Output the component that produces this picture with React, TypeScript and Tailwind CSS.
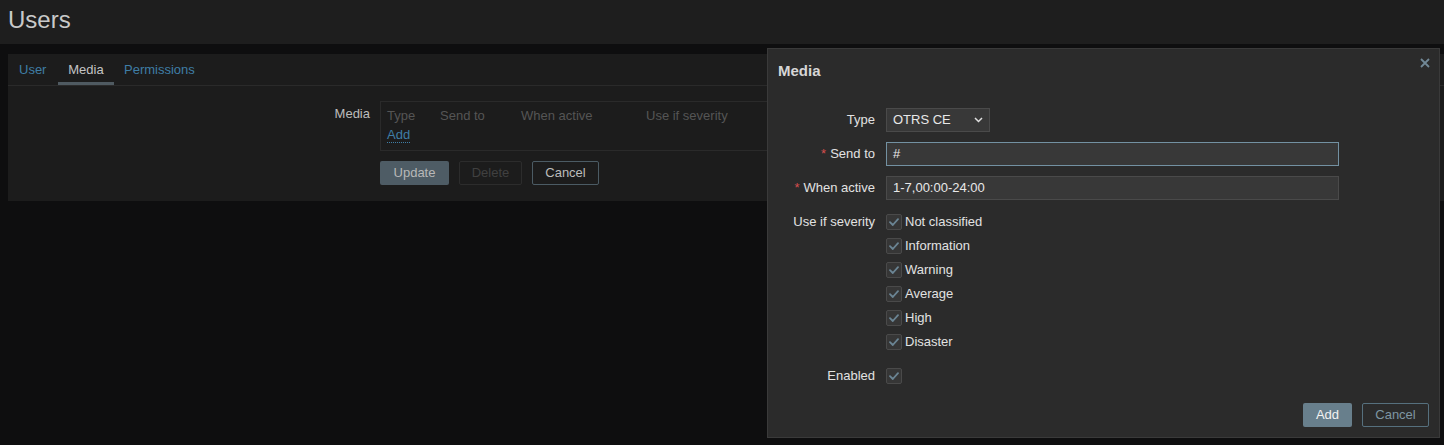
import React from "react";

const font = { fontFamily: '"Liberation Sans", Arial, sans-serif' };

function Check() {
  return (
    <span className="flex h-[16px] w-[16px] items-center justify-center rounded-[2px] border border-[#4a4a4a] bg-[#363636]">
      <svg width="10" height="8" viewBox="0 0 10 8" fill="none">
        <path d="M1 4.2 L3.8 7 L9 1.2" stroke="#6b8594" strokeWidth="1.8" strokeLinecap="round" strokeLinejoin="round" />
      </svg>
    </span>
  );
}

function Row({ label, req, children }: { label: string; req?: boolean; children: React.ReactNode }) {
  return (
    <div className="flex">
      <div className="flex h-[24px] w-[97px] shrink-0 items-center justify-end text-right text-[#e2e2e2]">
        {req && <span className="mr-[4px] text-[#d64e4e]">*</span>}
        {label}
      </div>
      <div className="ml-[11px] flex-1">{children}</div>
    </div>
  );
}

export default function App() {
  const sev = ["Not classified", "Information", "Warning", "Average", "High", "Disaster"];
  return (
    <div className="relative h-[445px] w-[1444px] overflow-hidden bg-[#0e0e0f] text-[13px]" style={font}>
      <div className="flex h-[44px] items-center bg-[#1e1e1e] pl-[8px] text-[24px] leading-none text-[#c9c9c9]">
        <span className="-mt-[4px]">Users</span>
      </div>
      <div className="ml-[8px] mt-[10px] bg-[#1c1c1c] pb-[16px]">
        <div className="flex h-[32px] border-b border-[#2a2a2a] pl-[1px]">
          <div className="flex w-[49px] items-center pl-[10px] text-[#3f7ea6]">User</div>
          <div className="flex w-[56px] items-center justify-center border-b-[3px] border-[#4f5a61] pt-[3px] text-[#c4c4c4]">Media</div>
          <div className="flex items-center px-[10px] text-[#3f7ea6]">Permissions</div>
        </div>
        <div className="mt-[15px] flex">
          <div className="w-[372px] pr-[10px] pt-[3px] text-right text-[#bdbdbd]">Media</div>
          <div className="flex-1 pr-[16px]">
            <div className="h-[50px] border border-[#2a2a2a] px-[6px] pt-[4px] leading-[19px]">
              <div className="flex text-[#555555]">
                <span className="w-[53px]">Type</span>
                <span className="w-[81px]">Send to</span>
                <span className="w-[125px]">When active</span>
                <span>Use if severity</span>
              </div>
              <div>
                <span className="border-b border-dotted border-[#3f7ea6] text-[#3f7ea6]">Add</span>
              </div>
            </div>
            <div className="mt-[10px] flex gap-[10px]">
              <button className="h-[24px] w-[69px] rounded-[2px] bg-[#4e5c65] text-[#b8b8b8]">Update</button>
              <button className="h-[24px] w-[63px] rounded-[2px] border border-[#2c2c2c] text-[#404040]">Delete</button>
              <button className="h-[24px] w-[67px] rounded-[2px] border border-[#4b5b64] text-[#bcbcbc]">Cancel</button>
            </div>
          </div>
        </div>
      </div>

      <div className="absolute left-[767px] top-[48px] flex h-[390px] w-[673px] flex-col border border-[#3a3a3a] bg-[#2b2b2b]">
        <div className="flex h-[44px] items-center pl-[10px] text-[15px] font-bold text-[#d6d6d6]">Media</div>
        <svg className="absolute right-[8px] top-[8px]" width="12" height="12" viewBox="0 0 12 12">
          <path d="M2 2 L10 10 M10 2 L2 10" stroke="#718896" strokeWidth="1.8" />
        </svg>
        <div className="mt-[15px] flex flex-col gap-[10px] pl-[10px]">
          <Row label="Type">
            <div className="flex h-[24px] w-[104px] items-center justify-between border border-[#4a4a4a] bg-[#383838] pl-[6px] pr-[6px] text-[#e8e8e8]">
              <span>OTRS CE</span>
              <svg width="9" height="6" viewBox="0 0 9 6" fill="none">
                <path d="M1 1 L4.5 4.5 L8 1" stroke="#e0e0e0" strokeWidth="1.5" />
              </svg>
            </div>
          </Row>
          <Row label="Send to" req>
            <div className="flex h-[24px] w-[453px] items-center border border-[#7391a2] bg-[#383838] pl-[6px] text-[#e8e8e8]">#</div>
          </Row>
          <Row label="When active" req>
            <div className="flex h-[24px] w-[453px] items-center border border-[#4a4a4a] bg-[#383838] pl-[6px] text-[#e8e8e8]">1-7,00:00-24:00</div>
          </Row>
          <div className="flex">
            <div className="flex h-[24px] w-[97px] shrink-0 items-center justify-end text-[#e2e2e2]">Use if severity</div>
            <div className="ml-[11px] flex flex-col">
              {sev.map((s) => (
                <div key={s} className="flex h-[24px] items-center gap-[3px] text-[#e2e2e2]">
                  <Check />
                  <span>{s}</span>
                </div>
              ))}
            </div>
          </div>
          <Row label="Enabled">
            <div className="flex h-[24px] items-center">
              <Check />
            </div>
          </Row>
        </div>
        <div className="mt-auto flex justify-end gap-[10px] pb-[10px] pr-[10px]">
          <button className="h-[24px] w-[49px] rounded-[2px] bg-[#687f8c] text-[#f2f2f2]">Add</button>
          <button className="h-[24px] w-[67px] rounded-[2px] border border-[#56707e] text-[#7e96a4]">Cancel</button>
        </div>
      </div>
    </div>
  );
}
